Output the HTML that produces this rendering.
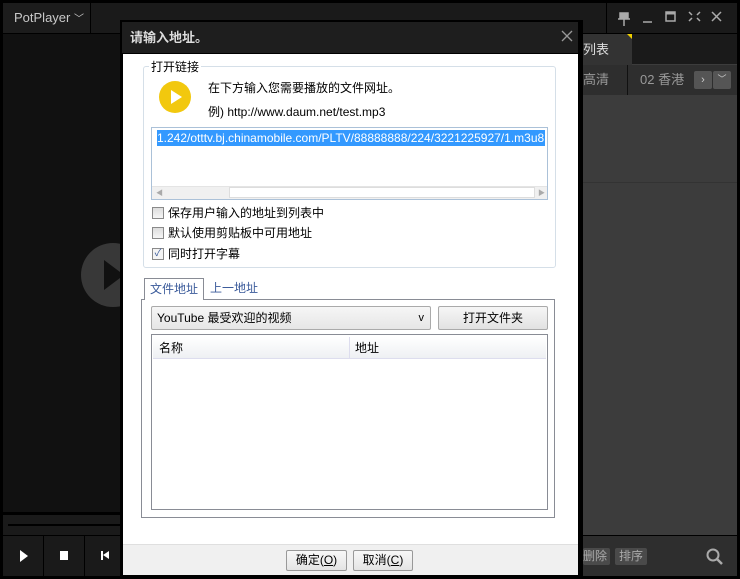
<!DOCTYPE html>
<html><head><meta charset="utf-8"><style>
*{margin:0;padding:0;box-sizing:border-box}
body{width:740px;height:579px;background:#000;position:relative;overflow:hidden;font-family:"Liberation Sans","Noto Sans CJK SC",sans-serif;font-size:12px}
.a{position:absolute}
</style></head><body>
<!-- top bar -->
<div class="a" style="left:3px;top:3px;width:734px;height:30px;background:#1a1a1a"></div>
<div class="a" style="left:3px;top:3px;width:88px;height:30px;background:#1c1c1c;border-right:1px solid #000;color:#c8c8c8;font-size:13px;line-height:30px;padding-left:11px">PotPlayer <span style="font-size:10px">﹀</span></div>
<div class="a" style="left:606px;top:3px;width:1px;height:30px;background:#000"></div>
<div class="a" style="left:616px;top:7px;color:#aaa;font-size:14px;letter-spacing:10px">
<svg width="120" height="20" style="position:absolute;left:0;top:0"><g fill="none" stroke="#aaa" stroke-width="1.5"><rect x="4" y="6" width="8" height="5" fill="#aaa"/><path d="M2 12h12M8 12v7"/><path d="M27 15h9"/><rect x="50" y="5" width="9" height="9"/><path d="M50 6h9" stroke-width="3"/><path d="M73 5l3 3M84 5l-3 3M73 14l3-3M84 14l-3-3"/><path d="M96 5l9 9M105 5l-9 9"/></g></svg></div>
<!-- video -->
<div class="a" style="left:3px;top:34px;width:117px;height:478px;background:#111"></div>
<div class="a" style="left:81px;top:243px;width:64px;height:64px;border-radius:50%;background:#383838"></div>
<div class="a" style="left:104px;top:260px;width:0;height:0;border-top:15px solid transparent;border-bottom:15px solid transparent;border-left:20px solid #111"></div>
<div class="a" style="left:3px;top:515px;width:117px;height:20px;background:#1a1a1a"></div>
<div class="a" style="left:8px;top:524px;width:112px;height:2px;background:#000"></div>
<div class="a" style="left:3px;top:536px;width:117px;height:40px;background:#1a1a1a"></div>
<div class="a" style="left:43px;top:536px;width:1px;height:40px;background:#000"></div>
<div class="a" style="left:84px;top:536px;width:1px;height:40px;background:#000"></div>
<div class="a" style="left:20px;top:550px;width:0;height:0;border-top:6px solid transparent;border-bottom:6px solid transparent;border-left:8px solid #fff"></div>
<div class="a" style="left:60px;top:551px;width:8px;height:9px;background:#fff"></div>
<div class="a" style="left:101px;top:551px;width:2px;height:9px;background:#fff"></div>
<div class="a" style="left:103px;top:551px;width:0;height:0;border-top:4.5px solid transparent;border-bottom:4.5px solid transparent;border-right:6px solid #fff"></div>
<!-- right panel -->
<div class="a" style="left:583px;top:34px;width:154px;height:502px;background:#3c3c3c"></div>
<div class="a" style="left:583px;top:34px;width:154px;height:30px;background:#1a1a1a"></div>
<div class="a" style="left:583px;top:34px;width:49px;height:31px;background:#333;color:#ddd;font-size:13px;line-height:31px">列表</div>
<div class="a" style="left:627px;top:34px;width:0;height:0;border-left:5px solid transparent;border-top:5px solid #f0d000"></div>
<div class="a" style="left:583px;top:65px;width:154px;height:30px;background:#2e2e2e;color:#999;font-size:13px;line-height:30px"><span style="padding-left:0">高清</span></div>
<div class="a" style="left:627px;top:65px;width:1px;height:30px;background:#111"></div>
<div class="a" style="left:640px;top:65px;color:#999;font-size:13px;line-height:30px">02 香港</div>
<div class="a" style="left:694px;top:71px;width:18px;height:18px;background:#555;border-radius:2px;color:#ccc;text-align:center;line-height:18px;font-size:11px">›</div>
<div class="a" style="left:713px;top:71px;width:18px;height:18px;background:#555;border-radius:2px;color:#ccc;text-align:center;line-height:16px;font-size:9px">﹀</div>
<div class="a" style="left:583px;top:182px;width:154px;height:1px;background:#333"></div>
<div class="a" style="left:583px;top:535px;width:154px;height:1px;background:#000"></div>
<div class="a" style="left:583px;top:536px;width:154px;height:40px;background:#2e2e2e"></div>
<div class="a" style="left:583px;top:548px;width:27px;height:17px;background:#4a4a4a;color:#aaa;font-size:12px;line-height:17px;border-radius:2px">删除</div>
<div class="a" style="left:615px;top:548px;width:32px;height:17px;background:#4a4a4a;color:#aaa;font-size:12px;line-height:17px;text-align:center;border-radius:2px">排序</div>
<svg class="a" style="left:705px;top:547px" width="20" height="20"><circle cx="8" cy="8" r="5.5" fill="none" stroke="#aaa" stroke-width="2"/><path d="M12 12l5 5" stroke="#aaa" stroke-width="2.5"/></svg>
<!-- dialog -->
<div class="a" style="left:120px;top:20px;width:463px;height:558px;background:#000"></div>
<div class="a" style="left:122px;top:22px;width:456px;height:31px;background:#1e1e1e;color:#ddd;font-size:13px;font-weight:bold;line-height:31px;padding-left:8px">请输入地址。</div>
<svg class="a" style="left:561px;top:30px" width="12" height="12"><path d="M1 1l10 10M11 1L1 11" stroke="#999" stroke-width="1.3"/></svg>
<div class="a" style="left:123px;top:54px;width:455px;height:521px;background:#fff"></div>
<div class="a" style="left:143px;top:66px;width:413px;height:202px;border:1px solid #d5dfe8;border-radius:3px"></div>
<div class="a" style="left:149px;top:59px;background:#fff;padding:0 2px;color:#000;line-height:16px">打开链接</div>
<div class="a" style="left:159px;top:81px;width:32px;height:32px;border-radius:50%;background:#f2c80e"></div>
<div class="a" style="left:171px;top:90px;width:0;height:0;border-top:7px solid transparent;border-bottom:7px solid transparent;border-left:11px solid #fff"></div>
<div class="a" style="left:208px;top:80px;color:#000;line-height:16px">在下方输入您需要播放的文件网址。</div>
<div class="a" style="left:208px;top:104px;color:#000;line-height:16px">例) http://www.daum.net/test.mp3</div>
<div class="a" style="left:151px;top:127px;width:397px;height:73px;border:1px solid #abc1d8"></div>
<div class="a" style="left:157px;top:130px;height:16px;background:#3399ff;color:#fff;line-height:16px;white-space:nowrap;padding-right:1px">1.242/otttv.bj.chinamobile.com/PLTV/88888888/224/3221225927/1.m3u8</div>
<div class="a" style="left:152px;top:186px;width:395px;height:13px;background:#f0f0f0;border-top:1px solid #e4e4e4"></div>
<div class="a" style="left:229px;top:187px;width:306px;height:11px;background:#fff;border:1px solid #ddd"></div>
<div class="a" style="left:156px;top:188px;color:#aaa;font-size:7px">◀</div>
<div class="a" style="left:538px;top:188px;color:#aaa;font-size:7px">▶</div>
<div class="a" style="left:152px;top:207px;width:12px;height:12px;border:1px solid #8a8a8a;background:linear-gradient(#ddd,#f6f6f6)"></div>
<div class="a" style="left:168px;top:205px;line-height:16px">保存用户输入的地址到列表中</div>
<div class="a" style="left:152px;top:227px;width:12px;height:12px;border:1px solid #8a8a8a;background:linear-gradient(#ddd,#f6f6f6)"></div>
<div class="a" style="left:168px;top:225px;line-height:16px">默认使用剪贴板中可用地址</div>
<div class="a" style="left:152px;top:248px;width:12px;height:12px;border:1px solid #8a8a8a;background:#f4f4f4;color:#3a5a9a;font-size:10px;line-height:10px;text-align:center">✓</div>
<div class="a" style="left:168px;top:246px;line-height:16px">同时打开字幕</div>
<!-- tabs -->
<div class="a" style="left:141px;top:299px;width:414px;height:219px;border:1px solid #898c95"></div>
<div class="a" style="left:144px;top:278px;width:60px;height:22px;border:1px solid #898c95;border-bottom:none;background:#fff;color:#3a5a9a;line-height:20px;text-align:center">文件地址</div>
<div class="a" style="left:210px;top:279px;color:#3a5a9a;line-height:18px">上一地址</div>
<div class="a" style="left:151px;top:306px;width:280px;height:24px;border:1px solid #aaa;border-radius:2px;background:linear-gradient(#f6f6f6,#e6e6e6);line-height:22px;padding-left:5px;color:#000">YouTube 最受欢迎的视频<span style="position:absolute;right:6px;font-size:11px">v</span></div>
<div class="a" style="left:438px;top:306px;width:110px;height:24px;border:1px solid #aaa;border-radius:2px;background:linear-gradient(#f6f6f6,#e2e2e2);line-height:22px;text-align:center">打开文件夹</div>
<div class="a" style="left:151px;top:334px;width:397px;height:176px;border:1px solid #898c95"></div>
<div class="a" style="left:153px;top:337px;width:393px;height:22px;background:linear-gradient(#fff,#eef0f3);border-bottom:1px solid #dde"></div>
<div class="a" style="left:159px;top:340px;line-height:16px">名称</div>
<div class="a" style="left:349px;top:337px;width:1px;height:22px;background:#dde"></div>
<div class="a" style="left:355px;top:340px;line-height:16px">地址</div>
<!-- footer -->
<div class="a" style="left:123px;top:544px;width:455px;height:31px;background:#f0f0f0;border-top:1px solid #dfdfdf"></div>
<div class="a" style="left:286px;top:550px;width:61px;height:21px;border:1px solid #999;border-radius:2px;background:linear-gradient(#f8f8f8,#e4e4e4);text-align:center;line-height:19px">确定(<u>O</u>)</div>
<div class="a" style="left:353px;top:550px;width:60px;height:21px;border:1px solid #999;border-radius:2px;background:linear-gradient(#f8f8f8,#e4e4e4);text-align:center;line-height:19px">取消(<u>C</u>)</div>
</body></html>
